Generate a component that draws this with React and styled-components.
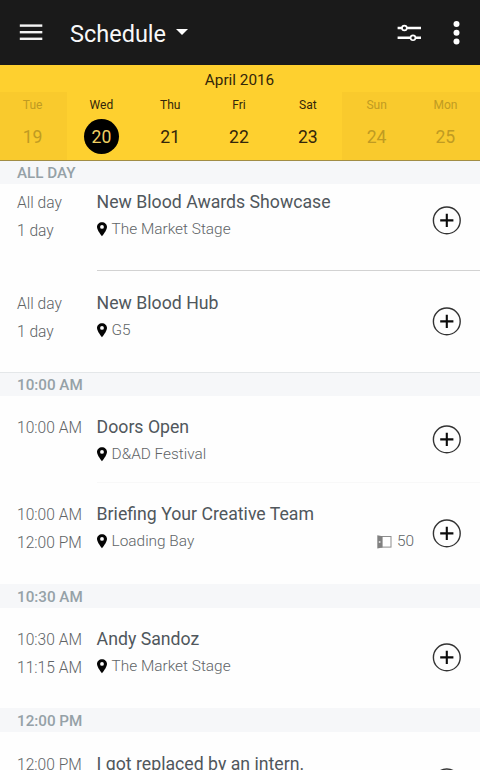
import React from "react";
import styled, { createGlobalStyle } from "styled-components";

const days = [
  { name: "Tue", date: 19, disabled: true },
  { name: "Wed", date: 20, active: true },
  { name: "Thu", date: 21 },
  { name: "Fri", date: 22 },
  { name: "Sat", date: 23 },
  { name: "Sun", date: 24, disabled: true },
  { name: "Mon", date: 25, disabled: true },
];

const sections = [
  {
    label: "ALL DAY",
    events: [
      { times: ["All day", "1 day"], title: "New Blood Awards Showcase", venue: "The Market Stage", line: "#d2d2d2" },
      { times: ["All day", "1 day"], title: "New Blood Hub", venue: "G5" },
    ],
  },
  {
    label: "10:00 AM",
    topLine: true,
    events: [
      { times: ["10:00 AM"], title: "Doors Open", venue: "D&AD Festival", line: "#f8f8f8", short: true },
      { times: ["10:00 AM", "12:00 PM"], title: "Briefing Your Creative Team", venue: "Loading Bay", seats: 50 },
    ],
  },
  {
    label: "10:30 AM",
    events: [
      { times: ["10:30 AM", "11:15 AM"], title: "Andy Sandoz", venue: "The Market Stage" },
    ],
  },
  {
    label: "12:00 PM",
    events: [
      { times: ["12:00 PM"], title: "I got replaced by an intern." },
    ],
  },
];

const MenuIcon = () => (
  <svg width="24" height="18" viewBox="0 0 24 18" fill="#f4f4f4">
    <rect x="0.8" y="0.4" width="22.5" height="2.4" />
    <rect x="0.8" y="7" width="22.5" height="2.4" />
    <rect x="0.8" y="13.6" width="22.5" height="2.4" />
  </svg>
);

const FilterIcon = () => (
  <svg width="24" height="18" viewBox="0 0 24 18" fill="#1a1a1a" stroke="#fff">
    <path d="M0.6 4H24M0.6 13.8H24" strokeWidth="2.4" />
    <circle cx="7.4" cy="4" r="2.4" strokeWidth="1.6" />
    <circle cx="16" cy="13.8" r="2.4" strokeWidth="1.6" />
  </svg>
);

const MoreIcon = () => (
  <svg width="8" height="26" viewBox="0 0 8 26" fill="#fff">
    <circle cx="4.5" cy="3.9" r="3" />
    <circle cx="4.5" cy="12.7" r="3" />
    <circle cx="4.5" cy="21.5" r="3" />
  </svg>
);

const PinIcon = () => (
  <svg width="10" height="15" viewBox="0 0 10 15">
    <path
      d="M5 0.2C2.2 0.2 0 2.3 0 5C0 8.4 5 14.2 5 14.2S10 8.4 10 5C10 2.3 7.8 0.2 5 0.2ZM5 3A1.9 1.9 0 1 1 5 6.8A1.9 1.9 0 0 1 5 3Z"
      fill="#050505"
    />
  </svg>
);

const SeatIcon = () => (
  <svg width="15" height="14" viewBox="0 0 15 14">
    <rect x="4" y="1.5" width="10" height="10.6" fill="#fff" stroke="#8d8d8d" strokeWidth="1" />
    <path d="M0.3 0.2L5.6 1.2V12.4L0.3 13.6Z" fill="#808080" />
    <circle cx="2.6" cy="7" r="1" fill="#ddd" />
  </svg>
);

const PlusIcon = () => (
  <svg width="30" height="30" viewBox="0 0 30 30" fill="none">
    <circle cx="14.8" cy="15.4" r="13.4" stroke="#333" strokeWidth="1.4" />
    <path d="M14.8 8.8V22M8.2 15.4H21.4" stroke="#0c0c0c" strokeWidth="2.1" />
  </svg>
);

const Event = ({ event }) => (
  <Row $short={event.short}>
    <Times>
      {event.times.map((time) => (
        <div key={time}>{time}</div>
      ))}
    </Times>
    <Details $line={event.line}>
      <Info>
        <Title>{event.title}</Title>
        {event.venue && (
          <Venue>
            <PinIcon />
            <span>{event.venue}</span>
            {event.seats && (
              <Seats>
                <SeatIcon />
                {event.seats}
              </Seats>
            )}
          </Venue>
        )}
      </Info>
      <AddButton aria-label="Add to schedule">
        <PlusIcon />
      </AddButton>
    </Details>
  </Row>
);

const App = () => {
  return (
    <Screen>
      <GlobalStyle />

      <Toolbar>
        <IconButton aria-label="Menu"><MenuIcon /></IconButton>
        <Heading>Schedule</Heading>
        <Caret />
        <Actions>
          <IconButton aria-label="Filter"><FilterIcon /></IconButton>
          <IconButton aria-label="More"><MoreIcon /></IconButton>
        </Actions>
      </Toolbar>

      <Calendar>
        <Month>April 2016</Month>
        <Week>
          {days.map((day) => (
            <Day key={day.date} $disabled={day.disabled}>
              <DayName>{day.name}</DayName>
              <DayNumber $active={day.active}>{day.date}</DayNumber>
            </Day>
          ))}
        </Week>
      </Calendar>

      {sections.map((section, i) => (
        <section key={section.label}>
          <SectionLabel $line={section.topLine} $pinned={i === 0}>{section.label}</SectionLabel>
          {section.events.map((event) => (
            <Event key={event.title} event={event} />
          ))}
        </section>
      ))}
    </Screen>
  );
};

export default App;

const GlobalStyle = createGlobalStyle`
  * {
    box-sizing: border-box;
  }

  body {
    margin: 0;
    overflow: hidden;
    font-family: Roboto, "Liberation Sans", sans-serif;
  }

  svg {
    display: block;
    flex-shrink: 0;
  }
`;

const Screen = styled.div`
  width: 480px;
  height: 770px;
  overflow: hidden;
  background: #fefefe;
`;

const Toolbar = styled.header`
  display: flex;
  align-items: center;
  height: 65px;
  padding: 0 20px 0 19px;
  background: #1a1a1a;
  color: #f8f8f8;
`;

const IconButton = styled.button`
  border: 0;
  padding: 0;
  background: none;
`;

const Heading = styled.h1`
  margin: 2px 0 0 27px;
  font-size: 23.5px;
  line-height: 30px;
  font-weight: 400;
`;

const Caret = styled.span`
  margin: 0 0 2px 10px;
  border: 6px solid transparent;
  border-top-color: #fff;
  border-bottom: 0;
`;

const Actions = styled.div`
  display: flex;
  align-items: center;
  gap: 31px;
  margin-left: auto;
`;

const Calendar = styled.div`
  height: 96px;
  overflow: hidden;
  background: #fed02f;
  border-bottom: 1px solid #a18d45;
`;

const Month = styled.div`
  height: 27px;
  padding: 1px 1px 0 0;
  font-size: 15.3px;
  line-height: 28px;
  text-align: center;
  color: #33260a;
`;

const Week = styled.div`
  display: grid;
  grid-template-columns: repeat(7, 68.8px);
  height: 68px;
  margin-left: -1.8px;
`;

const Day = styled.div`
  display: flex;
  flex-direction: column;
  align-items: center;
  padding-top: 5px;
  background: ${(props) => (props.$disabled ? "#f9ca2d" : "transparent")};
  color: ${(props) => (props.$disabled ? "#c09b22" : "#33260a")};
`;

const DayName = styled.div`
  font-size: 12px;
  line-height: 16px;
`;

const DayNumber = styled.div`
  width: 35px;
  height: 35px;
  margin-top: 6px;
  border-radius: 50%;
  font-size: 17.6px;
  line-height: 37px;
  text-align: center;
  background: ${(props) => (props.$active ? "#000" : "transparent")};
  color: ${(props) => (props.$active ? "#f0cf62" : "inherit")};
`;

const SectionLabel = styled.h2`
  position: relative;
  height: ${(props) => (props.$pinned ? "23px" : "24px")};
  /* the pinned label covers the top of the first row */
  margin: ${(props) => (props.$pinned ? "0 0 -13.75px" : "0")};
  padding-left: 17px;
  background: #f6f7f9;
  border-top: 1px solid ${(props) => (props.$line ? "#e4e7e9" : "#f6f7f9")};
  font-size: 15.2px;
  line-height: ${(props) => (props.$pinned ? "22px" : "24.5px")};
  font-weight: 500;
  color: #95a1a7;
  z-index: 1;
`;

const Row = styled.article`
  display: flex;
  height: ${(props) => (props.$short ? "87px" : "100.75px")};
  padding-left: 17px;
`;

const Times = styled.div`
  width: 79.6px;
  padding-top: 18.5px;
  font-size: 15.6px;
  line-height: 28px;
  font-weight: 300;
  color: #606466;
`;

const Details = styled.div`
  display: flex;
  align-items: center;
  flex: 1;
  padding-right: 18px;
  border-bottom: 1px solid ${(props) => props.$line || "transparent"};
`;

const Info = styled.div`
  flex: 1;
  align-self: flex-start;
  padding-top: 18.5px;
`;

const Title = styled.h3`
  margin: 0;
  font-size: 17.7px;
  line-height: 27px;
  font-weight: 400;
  color: #50575c;
`;

const Venue = styled.div`
  display: flex;
  align-items: center;
  gap: 5px;
  font-size: 15.4px;
  line-height: 27px;
  font-weight: 300;
  color: #606466;
`;

const Seats = styled.span`
  display: flex;
  align-items: center;
  gap: 5px;
  margin-left: auto;
`;

const AddButton = styled(IconButton)`
  margin-left: 18px;
`;
